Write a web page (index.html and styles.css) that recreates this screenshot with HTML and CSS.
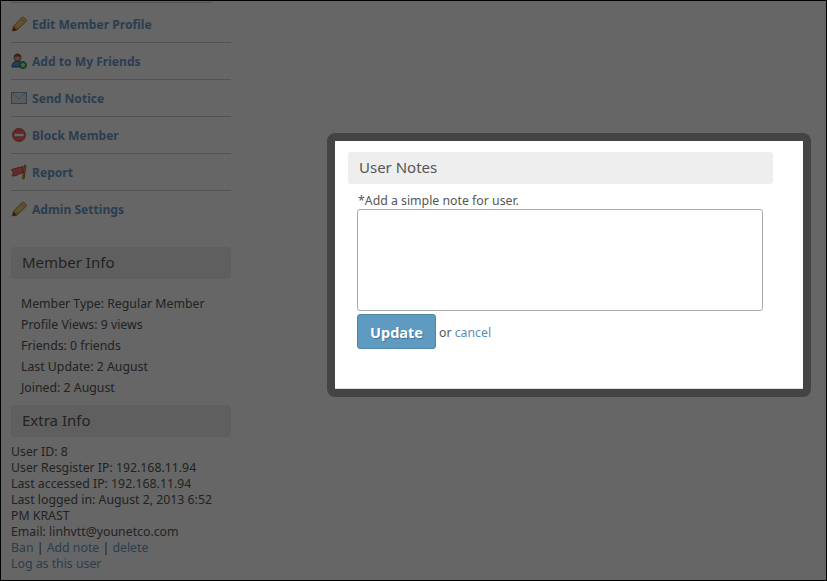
FILE: index.html
```html
<!DOCTYPE html>
<html lang="en">
<head>
<meta charset="utf-8">
<title>User Notes</title>
<link rel="stylesheet" href="styles.css">
</head>
<body>
<div class="page">
  <aside class="sidebar">
    <div class="top-rule"></div>
    <ul class="menu">
      <li class="menu-item"><svg class="icon" viewBox="0 0 16 16"><path d="M1.500 15l.8-4.500L10.500 2c1-1 2-1 3 0l1 1c1 1 1 2 0 3L6 14z" fill="#f0cd78" stroke="#b08038"/><path d="M3.500 9.500l3 3M10 2.800l3.500 3.500" stroke="#d09a40" fill="none"/><path d="M1.500 15l.8-4.500L6 14z" fill="#7a4a18"/></svg><a href="#">Edit Member Profile</a></li>
      <li class="menu-item"><svg class="icon" viewBox="0 0 16 16"><path d="M1 14c0-4 2-6 5.500-6s5 2 5 6z" fill="#5a9ae0" stroke="#2c5f94"/><circle cx="6.500" cy="4.500" r="3.500" fill="#e6b48c" stroke="#94583a"/><path d="M3 4.500c-.5-5 7.500-5 7 0-2-1.500-5-1.500-7 0z" fill="#94583a"/><circle cx="12" cy="12" r="3.500" fill="#56b864" stroke="#2f8f40"/><path d="M12 10v4M10 12h4" stroke="#fff"/></svg><a href="#">Add to My Friends</a></li>
      <li class="menu-item"><svg class="icon" viewBox="0 0 16 16"><rect x="0.500" y="2.500" width="15" height="11" fill="#dde9f6" stroke="#7aa2d0"/><path d="M1 3l7 6 7-6" fill="none" stroke="#a6c0de"/></svg><a href="#">Send Notice</a></li>
      <li class="menu-item"><svg class="icon" viewBox="0 0 16 16"><circle cx="8" cy="8" r="6.500" fill="#ee6468" stroke="#d0585c"/><rect x="3.500" y="6.800" width="9" height="2.400" fill="#fff"/></svg><a href="#">Block Member</a></li>
      <li class="menu-item"><svg class="icon" viewBox="0 0 16 16"><path d="M.500 5.500l11.500-3-.5 6.500-4.500 1-1 1.500-5 .5 1.500-3z" fill="#f07074" stroke="#d04448"/><path d="M13.500 1l1.500.5L13 15l-1.500-.5z" fill="#e4b650" stroke="#96701e"/></svg><a href="#">Report</a></li>
      <li class="menu-item"><svg class="icon" viewBox="0 0 16 16"><path d="M1.500 15l.8-4.500L10.500 2c1-1 2-1 3 0l1 1c1 1 1 2 0 3L6 14z" fill="#f0cd78" stroke="#b08038"/><path d="M3.500 9.500l3 3M10 2.800l3.500 3.500" stroke="#d09a40" fill="none"/><path d="M1.500 15l.8-4.500L6 14z" fill="#7a4a18"/></svg><a href="#">Admin Settings</a></li>
    </ul>
    <h2 class="heading member-heading">Member Info</h2>
    <ul class="info">
      <li>Member Type: Regular Member</li>
      <li>Profile Views: 9 views</li>
      <li>Friends: 0 friends</li>
      <li>Last Update: 2 August</li>
      <li>Joined: 2 August</li>
    </ul>
    <h2 class="heading">Extra Info</h2>
    <div class="extra">
      <div>User ID: 8</div>
      <div>User Resgister IP: 192.168.11.94</div>
      <div>Last accessed IP: 192.168.11.94</div>
      <div>Last logged in: August 2, 2013 6:52 PM KRAST</div>
      <div>Email: linhvtt@younetco.com</div>
      <div><a href="#">Ban</a> | <a href="#">Add note</a> | <a href="#">delete</a></div>
      <div><a href="#">Log as this user</a></div>
    </div>
  </aside>
  <div class="overlay"></div>
  <div class="modal">
    <div class="modal-body">
      <h2 class="heading modal-heading">User Notes</h2>
      <form class="note-form">
        <label class="note-label" for="note">*Add a simple note for user.</label>
        <textarea class="note-input" id="note"></textarea>
        <div class="actions">
          <button class="update" type="button">Update</button>
          <span class="or">or <a href="#">cancel</a></span>
        </div>
      </form>
    </div>
  </div>
</div>
</body>
</html>
```
FILE: styles.css
```css
* { box-sizing: border-box; }
html, body { margin: 0; padding: 0; }
body {
  font-family: "Noto Sans", sans-serif;
  font-size: 12.3px;
  color: #555;
  background: #fff;
}
a { color: #6a9cc8; text-decoration: none; }
ul { list-style: none; margin: 0; padding: 0; }

.page {
  position: relative;
  width: 827px;
  height: 581px;
  overflow: hidden;
  padding: 0 0 0 11px;
}
.sidebar { width: 220px; }
.top-rule { width: 201px; height: 3px; margin-bottom: 3px; border-bottom: 1px solid #ccc; }

.menu-item {
  display: flex;
  align-items: center;
  gap: 5px;
  height: 37px;
  border-bottom: 1px solid #d0d0d0;
}
.menu-item:last-child { border-bottom-color: transparent; }
.menu-item a { font-size: 12.1px; font-weight: bold; }
.icon { width: 16px; height: 16px; flex: none; }

.heading {
  margin: 0;
  height: 32px;
  padding: 0 11px;
  border-radius: 3px;
  background: #eee;
  color: #555;
  font-size: 15px;
  font-weight: normal;
  line-height: 30px;
}
.member-heading { margin-top: 19px; }

.info { padding: 14px 10px 7px; }
.info li { height: 21px; line-height: 21px; white-space: nowrap; }

.extra { padding-top: 7px; line-height: 16px; }

.overlay {
  position: absolute;
  inset: 0;
  background: rgba(0, 0, 0, 0.6);
  border: 1px solid #000;
}

.modal {
  position: absolute;
  left: 327px;
  top: 133px;
  width: 484px;
  height: 264px;
  border: 8px solid #444;
  border-radius: 8px;
}
.modal-body {
  height: 100%;
  padding: 11px 30px 0 13px;
  background: #fff;
  border-bottom: 1px solid #ddd;
}
.modal-heading { width: 425px; }
.note-form { padding: 9px 10px 0 9px; }
.note-label { display: block; height: 16px; padding-left: 1px; line-height: 16px; }
.note-input {
  display: block;
  width: 406px;
  height: 102px;
  margin: 0;
  border: 1px solid #aaa;
  border-radius: 3px;
  resize: none;
}
.actions { display: flex; align-items: center; gap: 3px; margin-top: 3px; }
.update {
  width: 79px;
  height: 35px;
  padding: 0;
  border: 1px solid #4f86a8;
  border-radius: 3px;
  background: #5f9bc0;
  color: #fff;
  font-family: "Noto Sans", sans-serif;
  font-size: 14.5px;
  font-weight: bold;
  text-shadow: 1px 1px 0 #3f7696;
}
.or { padding-top: 1px; color: #555; }
.or a { color: #5b8db8; }
```
